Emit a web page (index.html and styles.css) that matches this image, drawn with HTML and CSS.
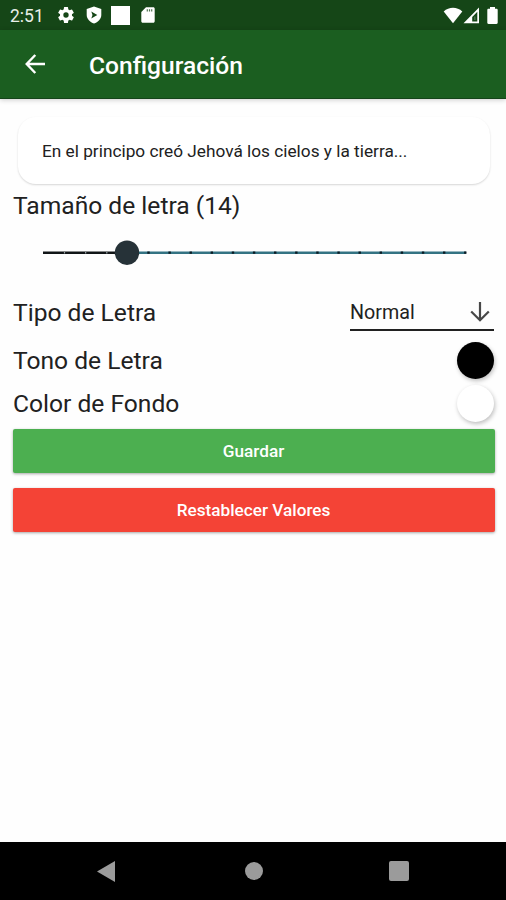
FILE: index.html
```html
<!DOCTYPE html>
<html lang="es">
<head>
<meta charset="utf-8">
<title>Configuración</title>
<link rel="stylesheet" href="styles.css">
</head>
<body>
<div class="status">
  <span class="clock">2:51</span>
  <svg class="gear" width="20" height="20" viewBox="0 0 24 24" fill="#fff"><path d="M19.14 12.94c.04-.3.06-.61.06-.94s-.02-.64-.07-.94l2.030-1.580a.49.49 0 0 0 .12-.61l-1.920-3.320a.49.49 0 0 0-.59-.22l-2.390.96a7 7 0 0 0-1.620-.94l-.36-2.540a.48.48 0 0 0-.48-.41h-3.840a.48.48 0 0 0-.47.41l-.36 2.540c-.59.24-1.130.57-1.620.94l-2.390-.96a.48.48 0 0 0-.59.22L2.740 8.870a.48.48 0 0 0 .12.61l2.030 1.580c-.05.3-.09.63-.09.94s.02.64.07.94l-2.030 1.580a.49.49 0 0 0-.12.61l1.920 3.320c.12.22.37.29.59.22l2.390-.96c.5.38 1.030.7 1.620.94l.36 2.540c.05.24.24.41.48.41h3.840c.24 0 .44-.17.47-.41l.36-2.540a7 7 0 0 0 1.620-.94l2.390.96c.22.08.47 0 .59-.22l1.920-3.320a.48.48 0 0 0-.12-.61zM12 15.200a3.200 3.200 0 1 1 0-6.400 3.200 3.200 0 0 1 0 6.400z"/></svg>
  <svg class="shield" width="16" height="18" viewBox="0 0 16 18"><path fill="#fff" d="M8 .5 15.300 3v6c0 4-3.300 7.200-7.300 8.500C4 16.200.7 13 .7 9V3z"/><path fill="#154617" d="M5.300 5.600 11.300 9l-6 3.400 1.200-3.400z"/></svg>
  <span class="block"></span>
  <svg class="card-icon" width="14" height="16" viewBox="0 0 14 16"><path fill="#fff" d="M5 .3h7.200c.9 0 1.500.6 1.500 1.500v12.400c0 .9-.6 1.500-1.500 1.500H1.800c-.9 0-1.500-.6-1.500-1.500V5z"/><path stroke="#154617" stroke-opacity=".75" stroke-width="1.200" d="M6.300 2.200v2.400M8.500 2.200v2.400M10.700 2.200v2.400"/></svg>
  <span class="grow"></span>
  <svg class="wifi" width="20" height="17" viewBox="0 0 20 17"><path fill="#fff" d="M.7 4.500C6-.4 14-.4 19.300 4.500L10 16.200z"/></svg>
  <svg class="signal" width="17" height="17" viewBox="0 0 17 17"><path fill="#fff" fill-rule="evenodd" d="M16 .5v15.800H.5zM14.300 4.800 9.200 10v4.500h5.100z"/><path fill="#fff" d="M11.200 9.500h1.300v3.500h-1.300z" opacity=".25"/></svg>
  <svg class="battery" width="11" height="17" viewBox="0 0 11 17"><path fill="#fff" d="M3 0h5v1.700h1.500c.7 0 1.200.5 1.200 1.200v12.900c0 .7-.5 1.200-1.200 1.200h-8C.8 17 .3 16.500.3 15.800V2.900c0-.7.500-1.200 1.200-1.200H3z"/></svg>
</div>
<header class="appbar">
  <svg width="20" height="20" viewBox="0 0 20 20" fill="none" stroke="#fff" stroke-width="2.400"><path d="M20 10H2M10.300 1 1.700 10l8.600 9"/></svg>
  <h1>Configuración</h1>
</header>
<main>
  <div class="preview"><span>En el principo creó Jehová los cielos y la tierra...</span></div>
  <div class="label size-label"><span>Tamaño de letra (14)</span></div>
  <svg class="slider" width="426" height="26" viewBox="0 0 426 26">
    <path d="M2 12.700h84" stroke="#111517" stroke-width="2.400"/>
    <path d="M86 12.700h339" stroke="#347383" stroke-width="2.400"/>
    <path d="M22.900 12.700H86" stroke="#9aa5a8" stroke-width="1.600" stroke-dasharray="1.200 19.950"/>
    <path d="M106.300 12.700H426" stroke="#0b1a22" stroke-width="2.200" stroke-dasharray="2.400 18.720"/>
    <circle cx="86" cy="12.700" r="12.200" fill="#263238"/>
  </svg>
  <div class="row type-row">
    <span class="label">Tipo de Letra</span>
    <div class="select"><span>Normal</span>
      <svg width="20" height="20" viewBox="0 0 20 20" fill="none" stroke="#484848" stroke-width="2.200"><path d="M10 0v18M1.200 9.500l8.800 8.800 8.800-8.800"/></svg>
    </div>
  </div>
  <div class="row tone-row"><span class="label">Tono de Letra</span><i class="dot black"></i></div>
  <div class="row back-row"><span class="label">Color de Fondo</span><i class="dot white"></i></div>
  <button class="save">Guardar</button>
  <button class="reset">Restablecer Valores</button>
</main>
<nav>
  <svg width="18" height="21" viewBox="0 0 18 21"><path fill="#9b9b9b" d="M18 0v21L0 10.500z"/></svg>
  <i class="home"></i>
  <i class="recent"></i>
</nav>
</body>
</html>
```
FILE: styles.css
```css
* { box-sizing: border-box; }
body {
  margin: 0;
  height: 900px;
  display: flex;
  flex-direction: column;
  background: #fefefe;
  color: #212121;
  font-family: Roboto, sans-serif;
  overflow: hidden;
}
.status {
  height: 30px;
  flex: none;
  display: flex;
  align-items: center;
  background: #154617;
  padding: 0 8px 0 10px;
  color: #fff;
}
.clock { width: 46px; font-size: 17.5px; line-height: 20px; padding-top: 2px; color: #e9efe9; }
.gear { margin-right: 10px; }
.shield { margin-right: 9px; }
.block { width: 19px; height: 19px; background: #fff; margin-right: 11px; }
.grow { flex: 1; }
.signal { margin-right: 7px; }
.appbar {
  height: 69px;
  flex: none;
  display: flex;
  align-items: center;
  padding-left: 25px;
  background: #1b5e20;
  border-bottom: 1px solid #15441a;
  box-shadow: 0 1px 5px rgba(0, 0, 0, .2);
  color: #fff;
}
h1 { margin: 4px 0 0 44px; font-size: 24.6px; font-weight: 500; line-height: 30px; }
main { flex: 1; padding: 18px 12px 0 13px; display: flex; flex-direction: column; }
.preview {
  height: 67px;
  flex: none;
  margin: 0 4px 1px 5px;
  padding: 0 24px;
  display: flex;
  align-items: center;
  border-radius: 18px;
  background: #fff;
  box-shadow: 0 1px 2px rgba(0, 0, 0, .16);
  font-size: 17.24px;
}
.label { font-size: 24.6px; line-height: 30px; white-space: nowrap; }
.size-label { margin-top: 6px; }
.slider { margin: 19px 0 0 28px; flex: none; }
.row { display: flex; justify-content: space-between; align-items: center; }
.type-row { margin-top: 27px; height: 38px; }
.type-row .label { padding-top: 2px; }
.select {
  width: 144px;
  height: 38px;
  display: flex;
  justify-content: space-between;
  align-items: center;
  padding: 2px 4px 0 0;
  border-bottom: 2px solid #212121;
  font-size: 19.7px;
}
.tone-row { height: 37px; margin-top: 11px; }
.back-row { height: 37px; margin-top: 6px; }
.dot { width: 37px; height: 37px; border-radius: 50%; box-shadow: 1px 2px 4px rgba(0, 0, 0, .25); }
.black { background: #000; }
.white { background: #fff; }
button {
  height: 44px;
  flex: none;
  margin: 0 -.5px;
  border: 0;
  border-radius: 2px;
  color: #fff;
  font: 500 17.2px/20px Roboto, sans-serif;
  box-shadow: 0 1px 3px rgba(0, 0, 0, .35);
}
.save { margin-top: 7px; background: #4caf50; }
.reset { margin-top: 15px; background: #f44336; }
nav {
  height: 58px;
  flex: none;
  display: flex;
  align-items: center;
  background: #000;
  padding-left: 97px;
}
.home { width: 18px; height: 18px; border-radius: 50%; background: #9b9b9b; margin-left: 130px; }
.recent { width: 20px; height: 20px; border-radius: 2px; background: #9b9b9b; margin-left: 126px; }
```
